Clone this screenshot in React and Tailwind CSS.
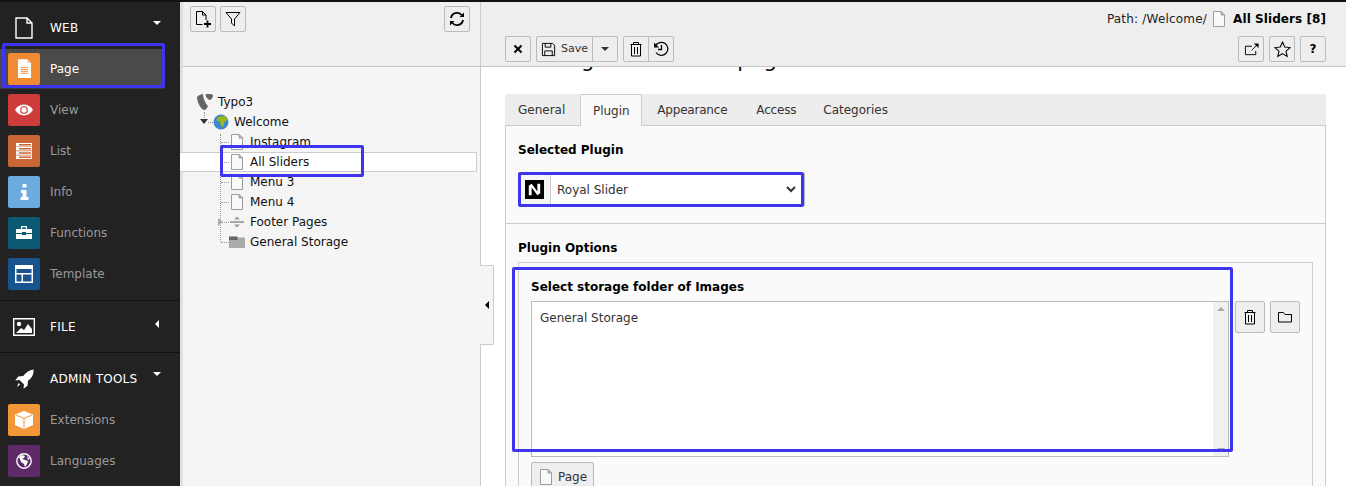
const ink = { fill: 'none', stroke: 'currentColor', strokeWidth: 1 };

function PageIcon({ className = 'w-4 h-4' }) {
  return (
    <svg viewBox="0 0 16 16" className={className}>
      <path d="M2.500 .5h7.500l3.500 3.500v11.500h-11z" fill="#fafafa" stroke="#9c9c9c" />
      <path d="M10 .5v3.500h3.500z" fill="#c8c8c8" stroke="#9c9c9c" />
    </svg>
  );
}

function ToolButton({ children, className = '' }) {
  return (
    <div className={`w-[26px] h-[26px] flex items-center justify-center bg-[#eeeeee] border border-[#bbbbbb] rounded-[2px] text-black ${className}`}>
      {children}
    </div>
  );
}

function TrashIcon() {
  return (
    <svg viewBox="0 0 16 16" className="w-4 h-4" {...ink}>
      <path d="M2.500 3.500h11M5.500 3.500v-2h5v2M3.500 3.500v11.500h9v-11.500M6.500 6v7M9.500 6v7" />
    </svg>
  );
}

function ModuleRow({ label, bg, active, children }) {
  return (
    <div className={`flex items-center pl-2 ${active ? 'h-[40px] mt-px w-[165px] bg-[#4a4a4a] border-b border-[#3a3a3a] rounded-r-[2px]' : 'h-[41px]'}`}>
      <div className={`w-8 h-8 rounded-[2px] flex items-center justify-center ${bg}`}>{children}</div>
      <span className={`ml-[10px] text-xs ${active ? 'text-white' : 'text-[#999999]'}`}>{label}</span>
    </div>
  );
}

function GroupHead({ label, caret, children }) {
  return (
    <div className="h-[41px] flex items-center relative">
      <div className="w-12 flex justify-center">{children}</div>
      <span className="ml-[2px] text-xs text-white tracking-[0.25px]">{label}</span>
      {caret === 'down' ? (
        <span className="absolute left-[153px] top-[14px] w-0 h-0 border-x-4 border-x-transparent border-t-4 border-t-white" />
      ) : (
        <span className="absolute left-[155px] top-[14px] w-0 h-0 border-y-4 border-y-transparent border-r-4 border-r-white" />
      )}
    </div>
  );
}

function Sidebar() {
  return (
    <aside className="w-[180px] shrink-0 bg-[#222222] pt-[5px]">
      <GroupHead label="WEB" caret="down">
        <svg viewBox="0 0 20 22" className="w-5 h-[22px]" fill="none" stroke="#fff" strokeWidth="1.400">
          <path d="M2 1h11l5 5v15h-16zM13 1v5h5" />
        </svg>
      </GroupHead>
      <ModuleRow label="Page" bg="bg-[#f18a33]" active>
        <svg viewBox="0 0 16 20" className="w-[15px] h-[19px]">
          <path d="M1 0h10l4 4v16h-14z" fill="#fff" />
          <path d="M11 0l4 4h-4z" fill="#f6c9a3" />
          <path d="M4 9h8M4 11h8M4 13h8M4 15h8" stroke="#f18a33" />
        </svg>
      </ModuleRow>
      <ModuleRow label="View" bg="bg-[#cd3c3a]">
        <svg viewBox="0 0 20 12" className="w-[18px] h-3">
          <path d="M0 6c3-4.500 6.500-6 10-6s7 1.500 10 6c-3 4.500-6.500 6-10 6s-7-1.500-10-6z" fill="#fff" />
          <circle cx="10" cy="6" r="4.300" fill="#cd3c3a" />
          <circle cx="10" cy="6" r="3" fill="#fff" />
        </svg>
      </ModuleRow>
      <ModuleRow label="List" bg="bg-[#c86634]">
        <svg viewBox="0 0 16 16" className="w-4 h-4" fill="#fff">
          <path fillRule="evenodd" d="M0 0h16v3.500h-16zM3 1v1.500h12v-1.500zM0 4h16v3.500h-16zM3 5v1.500h12v-1.500zM0 8.300h16v3.500h-16zM3 9.300v1.500h12v-1.500zM0 12.500h16v3.500h-16zM3 13.500v1.500h12v-1.500z" />
        </svg>
      </ModuleRow>
      <ModuleRow label="Info" bg="bg-[#6daae0]">
        <svg viewBox="0 0 9 16" className="w-[9px] h-4" fill="#fff">
          <path d="M2.500 0h4v3.500h-4zM1 6h5.500v7h2v3h-8v-3h2v-4h-1.500z" />
        </svg>
      </ModuleRow>
      <ModuleRow label="Functions" bg="bg-[#0b5a72]">
        <svg viewBox="0 0 16 13" className="w-4 h-[13px]" fill="#fff">
          <path d="M5 3v-3h6v3h-1.200v-1.800h-3.600v1.800zM0 3h16v4h-6v-1h-4v1h-6zM0 8h6v1h4v-1h6v5h-16z" />
        </svg>
      </ModuleRow>
      <ModuleRow label="Template" bg="bg-[#19548f]">
        <svg viewBox="0 0 18 18" className="w-[18px] h-[18px]" fill="#fff">
          <path fillRule="evenodd" d="M0 0h18v18h-18zM1.500 4v4h15v-4zM1.500 9.500v7h5v-7zM8 9.500v7h8.500v-7z" />
        </svg>
      </ModuleRow>
      <div className="mt-[6px] border-t border-[#111111]" />
      <div className="h-[51px] pt-[5px]">
        <GroupHead label="FILE" caret="left">
          <svg viewBox="0 0 22 18" className="w-[22px] h-[18px]">
            <path d="M.7 .7h20.600v16.600h-20.600z" fill="none" stroke="#fff" strokeWidth="1.400" />
            <circle cx="6" cy="6" r="2.200" fill="#fff" />
            <path d="M3 15l5-5 3 2 4-6 4 5v4z" fill="#fff" />
          </svg>
        </GroupHead>
      </div>
      <div className="border-t border-[#111111]" />
      <div className="pt-[5px]">
        <GroupHead label="ADMIN TOOLS" caret="down">
          <svg viewBox="0 0 20 20" className="w-5 h-5" fill="#fff">
            <path d="M19.500 .5c.3 5-1.500 8.500-5.500 11.300l-.5 5-4 3 .5-4.300-4.500-4.500-4.300.5 3-4 5-.5c2.800-4 6.300-5.800 10.300-6.500zM4.500 14l1.500 1.500-3 2.500z" />
          </svg>
        </GroupHead>
      </div>
      <ModuleRow label="Extensions" bg="bg-[#f39639]">
        <svg viewBox="0 0 18 18" className="w-[18px] h-[18px]">
          <path d="M9 0l9 3.500v10.500l-9 4-9-4v-10.500z" fill="#fff" />
          <path d="M1 4l8 3.500 8-3.500M9 7.500v10" fill="none" stroke="#f39639" />
        </svg>
      </ModuleRow>
      <ModuleRow label="Languages" bg="bg-[#5f2a68]">
        <svg viewBox="0 0 16 16" className="w-4 h-4">
          <circle cx="8" cy="8" r="7.200" fill="none" stroke="#fff" strokeWidth="1.400" />
          <path d="M3 4l3-2 3 1-1 2-2 1 3 1 3 1-1 3-2 3-1-3-3-2zM11 3l3 3-2 1z" fill="#fff" />
        </svg>
      </ModuleRow>
    </aside>
  );
}

function TreeRow({ label, selected, children, indent, stub }) {
  return (
    <div className={`h-5 flex items-center relative ${selected ? 'bg-white border-y border-r border-[#cccccc] mr-[3px] -ml-[3px] pl-[3px]' : ''}`}>
      {stub && <span className={`absolute left-[38px] top-[10px] w-2 border-t border-dotted border-[#999999] ${selected ? 'ml-[3px] -mt-px' : ''}`} />}
      <div className={`flex items-center ${indent}`}>
        <div className="w-4 h-4 flex items-center justify-center shrink-0">{children}</div>
        <span className="ml-[5px] text-xs text-[#111111]">{label}</span>
      </div>
    </div>
  );
}

function TreePanel() {
  return (
    <section className="w-[300px] shrink-0 bg-[#f5f5f5] border-l-[3px] border-[#e0e0e0] flex flex-col">
      <div className="h-[65px] bg-[#f0f0f0] border-b border-[#c4c4c4] flex items-start justify-between pt-1 pl-[7px] pr-[10px]">
        <div className="flex gap-[4px]">
          <ToolButton>
            <svg viewBox="0 0 18 18" className="w-[18px] h-[18px]" fill="none" stroke="#000">
              <path d="M8.500 14.500h-6v-13h6l3.500 3.500v5M8.500 1.500v3.500h3.500" />
              <path d="M13.500 10.500v7M10 14h7" strokeWidth="1.800" />
            </svg>
          </ToolButton>
          <ToolButton>
            <svg viewBox="0 0 16 16" className="w-4 h-4" fill="none" stroke="#000">
              <path d="M1 1.500h14l-5.500 6.500v7l-3-3v-4z" />
            </svg>
          </ToolButton>
        </div>
        <ToolButton>
          <svg viewBox="0 0 16 16" className="w-4 h-4" fill="none" stroke="#000" strokeWidth="1.800">
            <path d="M2 7a6 6 0 0 1 10.500-3M14 9a6 6 0 0 1-10.500 3" />
            <path d="M15 1.500v4.500h-4.500zM1 14.500v-4.500h4.500z" fill="#000" stroke="none" />
          </svg>
        </ToolButton>
      </div>
      <div className="pt-[25px] relative">
        {/* dotted connectors of the tree */}
        <div className="absolute left-[37px] top-[67px] h-[108px] border-l border-dotted border-[#999999]" />
        <div className="absolute left-[21px] top-[45px] h-[6px] border-l border-dotted border-[#999999]" />
        <TreeRow label="Typo3" indent="pl-[14px]">
          <svg viewBox="0 0 16 16" className="w-4 h-4" fill="#666666">
            <path d="M0 3.500c0-1.500 3-3 6-3.500 0 4 2.500 9.500 5 12-1 2-2 4-3.500 4-3.500 0-7.500-8-7.500-12.500z" />
            <path d="M8.500 .3c3-.6 7-.3 7.500 1.200 0 2-2 4.500-3 4.500-1.500 0-4.500-2.500-4.500-5.700z" />
          </svg>
        </TreeRow>
        <TreeRow label="Welcome" indent="pl-[30px]">
          <span className="absolute left-[17px] top-[7px] w-0 h-0 border-x-[4px] border-x-transparent border-t-[5px] border-t-[#333333]" />
          <span className="absolute left-[25px] top-[10px] w-[5px] border-t border-dotted border-[#999999]" />
          <svg viewBox="0 0 16 16" className="w-4 h-4">
            <circle cx="8" cy="8" r="7.500" fill="#3f87cf" />
            <path d="M6 2.500l6-.5 2.500 3.500-3 2.500-1.500 5.500-2.500-3-.5-3-3-.5-.5-2z" fill="#9ab81d" />
          </svg>
        </TreeRow>
        <TreeRow label="Instagram" indent="pl-[46px]" stub><PageIcon /></TreeRow>
        <TreeRow label="All Sliders" indent="pl-[46px]" selected stub><PageIcon /></TreeRow>
        <TreeRow label="Menu 3" indent="pl-[46px]" stub><PageIcon /></TreeRow>
        <TreeRow label="Menu 4" indent="pl-[46px]" stub><PageIcon /></TreeRow>
        <TreeRow label="Footer Pages" indent="pl-[46px]" stub>
          <span className="absolute left-[35px] top-[6px] w-0 h-0 border-y-[4px] border-y-transparent border-l-[5px] border-l-[#aaaaaa]" />
          <svg viewBox="0 0 16 16" className="w-4 h-4">
            <path d="M1 8h14" stroke="#555555" />
            <path d="M8 2.500l3 3h-6zM8 13.500l3-3h-6z" fill="#999999" />
          </svg>
        </TreeRow>
        <TreeRow label="General Storage" indent="pl-[46px]" stub>
          <svg viewBox="0 0 16 12" className="w-4 h-3">
            <path d="M0 0h8l1 1.500h7v10.500h-16z" fill="#aaaaaa" />
            <path d="M0 1h8.500v3h-8.500z" fill="#666666" />
          </svg>
        </TreeRow>
      </div>
    </section>
  );
}

function EditorHeader() {
  return (
    <header className="h-[65px] bg-[#eeeeee] border-b border-[#c4c4c4] relative z-10 pl-6 pr-5">
      <div className="h-[34px] flex items-center justify-end text-xs text-[#222222]">
        <span className="tracking-[0.2px]">Path: /Welcome/</span>
        <PageIcon className="w-4 h-4 mx-[4px]" />
        <b className="ml-[2px] font-bold text-black tracking-[0.07px]">All Sliders [8]</b>
      </div>
      <div className="flex justify-between">
        <div className="flex gap-[5px]">
          <ToolButton>
            <svg viewBox="0 0 10 10" className="w-[10px] h-[10px]" stroke="#000" strokeWidth="2"><path d="M1.500 1.500l7 7M8.500 1.500l-7 7" /></svg>
          </ToolButton>
          <div className="flex">
            <div className="h-[26px] w-[57px] flex items-center justify-center gap-[5px] bg-[#eeeeee] border border-[#bbbbbb] rounded-l-[2px] text-[11px] text-[#333333]">
              <svg viewBox="0 0 16 16" className="w-[15px] h-[15px]" fill="none" stroke="#000">
                <path d="M1.500 1.500h11l2 2v11h-13zM4.500 1.500v4h6v-4M4 14.500v-5h8v5" />
              </svg>
              Save
            </div>
            <div className="h-[26px] w-[26px] -ml-px flex items-center justify-center bg-[#eeeeee] border border-[#bbbbbb] rounded-r-[2px]">
              <span className="w-0 h-0 border-x-4 border-x-transparent border-t-4 border-t-[#333333]" />
            </div>
          </div>
          <div className="flex">
            <ToolButton className="rounded-r-none"><TrashIcon /></ToolButton>
            <ToolButton className="-ml-px rounded-l-none">
              <svg viewBox="0 0 16 16" className="w-4 h-4" fill="none" stroke="#000" strokeWidth="1.300">
                <path d="M2.500 5a6.500 6.500 0 1 1 .5 6.500M8.500 4v4.500h-3.500" />
                <path d="M1 1.500v5h5z" fill="#000" stroke="none" />
              </svg>
            </ToolButton>
          </div>
        </div>
        <div className="flex gap-[5px]">
          <ToolButton>
            <svg viewBox="0 0 16 16" className="w-[15px] h-[15px]" fill="none" stroke="#000">
              <path d="M8.500 4.500h-7v9h11v-4M8 9l6-6" />
              <path d="M10.500 1.500h5v5z" fill="#000" stroke="none" />
            </svg>
          </ToolButton>
          <ToolButton>
            <svg viewBox="0 0 16 16" className="w-[17px] h-[17px]" fill="none" stroke="#000">
              <path d="M8 1l2.100 4.700 5 .5-3.800 3.300 1.100 5-4.400-2.600-4.400 2.600 1.100-5-3.800-3.300 5-.5z" />
            </svg>
          </ToolButton>
          <ToolButton><span className="text-xs font-bold leading-none">?</span></ToolButton>
        </div>
      </div>
    </header>
  );
}

function Tabs() {
  return (
    <div className="h-8 bg-[#ededed] flex text-xs text-[#333333] rounded-t-[2px]">
      <div className="h-8 pl-[13px] pr-[15px] flex items-center border-b border-[#cccccc]">General</div>
      <div className="h-8 w-[62px] flex items-center justify-center bg-[#fafafa] border-x border-t border-[#cccccc] rounded-t-[2px]">Plugin</div>
      <div className="h-8 pl-[15px] pr-[15px] flex items-center border-b border-[#cccccc] tracking-[-0.2px]">Appearance</div>
      <div className="h-8 pl-[14px] pr-[13px] flex items-center border-b border-[#cccccc] tracking-[-0.2px]">Access</div>
      <div className="h-8 pl-[14px] pr-[14px] flex items-center border-b border-[#cccccc]">Categories</div>
      <div className="flex-1 border-b border-[#cccccc]" />
    </div>
  );
}

function Editor() {
  return (
    <section className="flex-1 min-w-0 flex flex-col border-l border-[#cccccc] relative">
      <EditorHeader />
      <div className="flex-1 bg-white overflow-hidden pl-6 pr-5">
        {/* page title is scrolled under the toolbar, only the descenders show */}
        <h1 className="text-[21px] leading-[24px] -mt-[19px] text-black whitespace-nowrap">Creating a new Slider page</h1>
        <div className="mt-[22px]">
          <Tabs />
          <div className="bg-[#fafafa] border-x border-[#cccccc] h-[400px]">
            <div className="h-[97px] box-content border-b border-[#cccccc] px-3">
              <p className="pt-[17px] text-xs font-bold text-black leading-[15px]">Selected Plugin</p>
              <div className="mt-[15px] w-[287px] h-[33px] flex border border-[#bbbbbb] bg-white">
                <div className="w-[32px] bg-[#f5f5f5] border-r border-[#cccccc] flex items-center justify-center">
                  <svg viewBox="0 0 20 20" className="w-[19px] h-[19px]">
                    <path d="M0 0h20v20h-20z" fill="#000" />
                    <path d="M4 6l3-2v12h-3zM13 4h3v10l-3 2zM7 4l6 8v4l-6-8z" fill="#fff" />
                  </svg>
                </div>
                <select className="flex-1 min-w-0 mr-[5px] bg-white text-xs text-[#333333] pl-[2px] pr-[3px] outline-none font-['DejaVu_Sans',sans-serif]" defaultValue="Royal Slider">
                  <option>Royal Slider</option>
                </select>
              </div>
            </div>
            <div className="px-3">
              <p className="pt-[17px] text-xs font-bold text-black leading-[15px]">Plugin Options</p>
              <div className="mt-[6px] w-[795px] h-[300px] border border-[#cccccc] px-3">
                <p className="pt-[17px] text-xs font-bold text-black leading-[15px]">Select storage folder of Images</p>
                <div className="mt-[6px] flex gap-[6px]">
                  <div className="w-[698px] h-[156px] flex border border-[#bbbbbb] bg-white">
                    <p className="flex-1 pt-[9px] pl-2 text-xs text-[#333333] leading-[15px]">General Storage</p>
                    <div className="w-[15px] bg-[#f0f0f0] flex flex-col items-center justify-between pt-[5px] pb-[4px]">
                      <span className="w-0 h-0 border-x-4 border-x-transparent border-b-4 border-b-[#a8a8a8]" />
                      <span className="w-0 h-0 border-x-4 border-x-transparent border-t-4 border-t-[#a8a8a8]" />
                    </div>
                  </div>
                  <div className="flex gap-[5px] items-start">
                    <ToolButton className="!w-[30px] !h-[32px]"><TrashIcon /></ToolButton>
                    <ToolButton className="!w-[30px] !h-[32px]">
                      <svg viewBox="0 0 16 16" className="w-4 h-4" fill="none" stroke="#000">
                        <path d="M1.500 3.500h5l1.500 2h6.500v7.500h-13z" />
                      </svg>
                    </ToolButton>
                  </div>
                </div>
                <div className="mt-[5px] w-[63px] h-[30px] flex items-center justify-center gap-[4px] bg-[#eeeeee] border border-[#bbbbbb] rounded-[2px] text-xs text-[#333333]">
                  <PageIcon />
                  Page
                </div>
              </div>
            </div>
          </div>
        </div>
      </div>
      {/* collapse handle over the pane edge */}
      <div className="absolute -left-px top-[263px] w-[14px] h-[80px] bg-[#f5f5f5] border border-l-0 border-[#cccccc] rounded-r-[2px] flex items-center justify-center">
        <span className="w-0 h-0 border-y-4 border-y-transparent border-r-4 border-r-black" />
      </div>
    </section>
  );
}

function Marker({ className }) {
  return <div className={`absolute border-[3px] border-[#3f35ee] rounded-[2px] pointer-events-none z-20 ${className}`} />;
}

export default function App() {
  return (
    <div className="w-[1346px] h-[486px] overflow-hidden relative flex flex-col bg-white font-['DejaVu_Sans',sans-serif]">
      <div className="h-[2px] bg-[#111111] shrink-0" />
      <div className="flex-1 min-h-0 flex">
        <Sidebar />
        <TreePanel />
        <Editor />
      </div>
      <Marker className="left-[2px] top-[43px] w-[163px] h-[45px]" />
      <Marker className="left-[220px] top-[145px] w-[144px] h-[32px]" />
      <Marker className="left-[518px] top-[172px] w-[286px] h-[35px]" />
      <Marker className="left-[512px] top-[267px] w-[721px] h-[185px]" />
    </div>
  );
}
